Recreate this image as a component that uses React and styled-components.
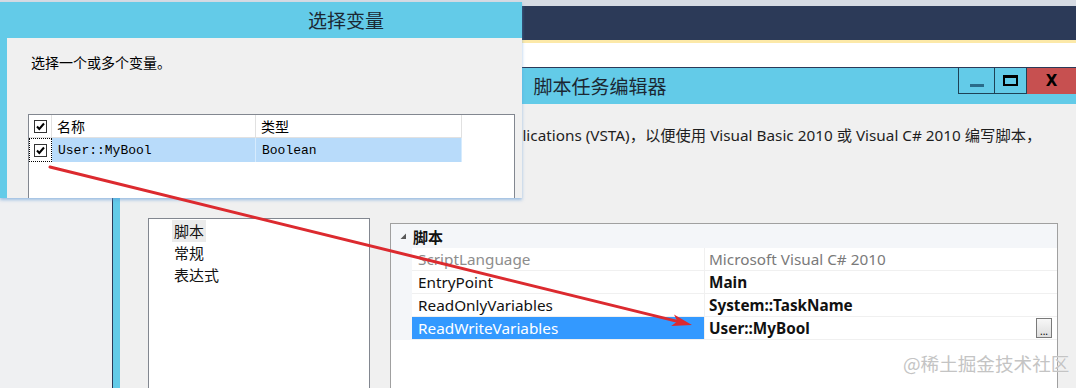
import React from 'react'
import styled, { createGlobalStyle } from 'styled-components'

const GlobalStyle = createGlobalStyle`
  *, *::before, *::after { box-sizing: border-box; }
  html, body { margin: 0; padding: 0; }
  body {
    width: 1076px;
    height: 388px;
    overflow: hidden;
    background: #eff0f2;
    font-family: "Noto Sans", "Noto Sans CJK SC", sans-serif;
    color: #1e1e1e;
  }
`

const Screen = styled.div`
  position: relative;
  width: 1076px;
  height: 388px;
  overflow: hidden;
  display: flex;
  flex-direction: column;
  background: #eff0f2;
`
const TopStrip = styled.div`
  height: 6px;
  flex-shrink: 0;
  background: #d6dbe3;
`
const NavBar = styled.div`
  height: 34px;
  flex-shrink: 0;
  background: #2c3a58;
`
const InfoLine = styled.div`
  height: 3px;
  flex-shrink: 0;
  background: #fce9a9;
`
const WhiteBar = styled.div`
  height: 24px;
  flex-shrink: 0;
  background: #ffffff;
`
const Desk = styled.div`
  display: flex;
  flex: 1;
  min-height: 0;
`
const Gutter = styled.div`
  width: 112px;
  flex-shrink: 0;
  background: #eff0f2;
`
const Window = styled.div`
  width: 972px;
  flex-shrink: 0;
  display: flex;
  flex-direction: column;
  border-top: 1px solid #2c3a58;
  border-left: 1px solid #2c3a58;
  background: #63cbe8;
  padding: 0 8px 0 7px;
`
const TitleBar = styled.div`
  height: 36px;
  flex-shrink: 0;
  display: flex;
  align-items: flex-start;
`
const TitleText = styled.div`
  flex: 1;
  padding-left: 122px;
  text-align: center;
  font-family: "Noto Sans CJK SC", sans-serif;
  font-size: 19px;
  line-height: 36px;
  color: #1b2833;
`
const WinButtons = styled.div`
  display: flex;
  height: 26px;
`
const WinButton = styled.div`
  width: ${p => p.$w}px;
  height: 26px;
  display: flex;
  align-items: center;
  justify-content: center;
  background: ${p => (p.$close ? '#c75050' : 'transparent')};
  border: ${p => (p.$close ? 'none' : '1px solid #1e4256')};
  border-top: none;
  border-right: ${p => (p.$last ? '1px solid #1e4256' : 'none')};
`
const MinGlyph = styled.span`
  width: 14px;
  height: 3px;
  margin-top: 9px;
  background: #2a6c8a;
`
const MaxGlyph = styled.span`
  width: 15px;
  height: 11px;
  border: 2px solid #000;
  border-top-width: 3px;
`
const CloseGlyph = styled.span`
  font-family: "DejaVu Sans", sans-serif;
  font-weight: bold;
  font-size: 15px;
  line-height: 1;
  color: #000;
`
const WinBody = styled.div`
  flex: 1;
  min-height: 0;
  background: #f0f0f0;
  padding: 20px 0 0 28px;
  display: flex;
  flex-direction: column;
`
const Description = styled.div`
  font-size: 15.3px;
  line-height: 22px;
  white-space: nowrap;
  padding-left: ${p => p.$indent}px;
  color: #1e1e1e;
`
const ContentRow = styled.div`
  display: flex;
  align-items: flex-start;
  gap: 20px;
  margin-top: 72px;
`
const TreeList = styled.div`
  width: 222px;
  height: 200px;
  flex-shrink: 0;
  background: #fff;
  border: 1px solid #828790;
  padding-top: 1px;
`
const TreeItem = styled.div`
  width: fit-content;
  margin-left: 23px;
  padding: 0 2px;
  height: 22px;
  line-height: 22px;
  font-family: "Noto Sans CJK SC", sans-serif;
  font-size: 15px;
  color: #111;
  background: ${p => (p.$active ? '#ebebeb' : 'transparent')};
`
const PropGrid = styled.div`
  width: 668px;
  height: 200px;
  flex-shrink: 0;
  margin-top: 5px;
  background: #fff;
  border: 1px solid #a0a0a0;
`
const CategoryRow = styled.div`
  height: 24px;
  display: flex;
  align-items: center;
  gap: 6px;
  padding-left: 9px;
  background: #f4f6f9;
  font-family: "Noto Sans CJK SC", sans-serif;
  font-weight: bold;
  font-size: 15px;
  color: #111;
`
const PropRow = styled.div`
  display: grid;
  grid-template-columns: 21px 293px 1fr;
  height: 23px;
`
const RowGutter = styled.div`
  background: #f4f6f9;
`
const NameCell = styled.div`
  padding-left: 6px;
  font-size: 15.3px;
  line-height: 22px;
  border-bottom: 1px solid #f0f0f0;
  border-right: 1px solid #f0f0f0;
  white-space: nowrap;
  background: ${p => (p.$selected ? '#3399ff' : '#fff')};
  color: ${p => (p.$selected ? '#fff' : p.$muted ? '#8d8d8d' : '#111')};
`
const ValueCell = styled.div`
  display: flex;
  align-items: center;
  padding-left: 4px;
  font-size: 15.3px;
  line-height: 22px;
  border-bottom: 1px solid #f0f0f0;
  white-space: nowrap;
  font-weight: ${p => (p.$bold ? 'bold' : 'normal')};
  color: ${p => (p.$muted ? '#7a7a7a' : '#111')};
`
const EllipsisButton = styled.div`
  margin-left: auto;
  margin-right: 5px;
  width: 16px;
  height: 20px;
  border: 1px solid #7a7a7a;
  background: linear-gradient(#f7f7f7, #dedede);
  font-size: 10px;
  line-height: 24px;
  text-align: center;
  font-weight: normal;
  color: #000;
`

/* variable picker dialog over the editor */
const Dialog = styled.div`
  position: absolute;
  left: 0;
  top: 2px;
  width: 522px;
  height: 196px;
  overflow: hidden;
  display: flex;
  flex-direction: column;
  background: #f0f0f0;
  border-left: 7px solid #63cbe8;
  box-shadow: 0 2px 3px rgba(90, 150, 215, 0.55);
`
const DialogTitle = styled.div`
  height: 36px;
  flex-shrink: 0;
  background: #63cbe8;
  padding-left: 301px;
  font-family: "Noto Sans CJK SC", sans-serif;
  font-size: 19px;
  line-height: 36px;
  color: #1b2833;
`
const DialogBody = styled.div`
  padding: 14px 0 0 21px;
`
const Prompt = styled.div`
  padding-left: 3px;
  font-family: "Noto Sans CJK SC", sans-serif;
  font-size: 14px;
  line-height: 20px;
  color: #000;
`
const VarList = styled.div`
  margin-top: 42px;
  width: 487px;
  height: 120px;
  background: #fff;
  border: 1px solid #828790;
`
const VarRow = styled.div`
  display: flex;
  height: ${p => (p.$header ? 23 : 24)}px;
`
const VarCell = styled.div`
  width: ${p => p.$w}px;
  flex-shrink: 0;
  display: flex;
  align-items: center;
  padding-left: ${p => (p.$check ? 0 : p.$mono ? 6 : 5)}px;
  justify-content: ${p => (p.$check ? 'center' : 'flex-start')};
  border-right: 1px solid ${p => (p.$header ? '#e1e1e1' : p.$selected ? '#d6ebfd' : 'transparent')};
  border-bottom: ${p => (p.$header ? '1px solid #e1e1e1' : 'none')};
  background: ${p => (p.$selected ? '#b8dbfa' : '#fff')};
  outline: ${p => (p.$focus ? '1px dotted #000' : 'none')};
  outline-offset: -1px;
  font-family: ${p => (p.$mono ? '"Liberation Mono", monospace' : '"Noto Sans CJK SC", sans-serif')};
  font-size: ${p => (p.$mono ? 13 : 14)}px;
  color: #000;
`
const CheckBox = styled.span`
  width: 13px;
  height: 13px;
  display: flex;
  align-items: center;
  justify-content: center;
  border: 1px solid #333;
  background: #fff;
`

const Overlay = styled.svg`
  position: absolute;
  left: 0;
  top: 0;
  pointer-events: none;
`
const Watermark = styled.div`
  position: absolute;
  left: 903px;
  top: 350px;
  font-family: "Noto Sans CJK SC", sans-serif;
  font-size: 18.6px;
  line-height: 26px;
  color: #c4c4c4;
  text-shadow: 0 0 1px #fff;
  white-space: nowrap;
  pointer-events: none;
`

const Check = () => (
  <CheckBox>
    <svg width="11" height="11" viewBox="0 0 11 11">
      <path d="M2 5.5 L4.3 8 L9 2.5" fill="none" stroke="#000" strokeWidth="2" />
    </svg>
  </CheckBox>
)

const Triangle = () => (
  <svg width="7" height="7" viewBox="0 0 7 7">
    <polygon points="6,0.5 6,6 0.5,6" fill="#595959" />
  </svg>
)

const props = [
  { name: 'ScriptLanguage', value: 'Microsoft Visual C# 2010', muted: true },
  { name: 'EntryPoint', value: 'Main' },
  { name: 'ReadOnlyVariables', value: 'System::TaskName' },
  { name: 'ReadWriteVariables', value: 'User::MyBool', selected: true },
]

const Arrow = () => {
  const x1 = 50, y1 = 167, x2 = 692, y2 = 325
  const dx = x2 - x1, dy = y2 - y1
  const len = Math.hypot(dx, dy)
  const ux = dx / len, uy = dy / len
  const px = -uy, py = ux
  const bx = x2 - ux * 20, by = y2 - uy * 20
  const nx = x2 - ux * 15, ny = y2 - uy * 15
  const head = [
    [x2, y2],
    [bx + px * 6, by + py * 6],
    [nx, ny],
    [bx - px * 6, by - py * 6],
  ].map(p => p.join(',')).join(' ')
  return (
    <Overlay width="1076" height="388">
      <line x1={x1} y1={y1} x2={nx} y2={ny} stroke="#dc2a2f" strokeWidth="3" strokeLinecap="round" />
      <polygon points={head} fill="#dc2a2f" />
    </Overlay>
  )
}

const App = () => {
  return (
    <Screen>
      <GlobalStyle />
      <TopStrip />
      <NavBar />
      <InfoLine />
      <WhiteBar />
      <Desk>
        <Gutter />
        <Window>
          <TitleBar>
            <TitleText>脚本任务编辑器</TitleText>
            <WinButtons>
              <WinButton $w={36}><MinGlyph /></WinButton>
              <WinButton $w={33} $last><MaxGlyph /></WinButton>
              <WinButton $w={49} $close><CloseGlyph>X</CloseGlyph></WinButton>
            </WinButtons>
          </TitleBar>
          <WinBody>
            {/* the start of the sentence sits under the dialog */}
            <Description $indent={365}>
              plications (VSTA)，以便使用 Visual Basic 2010 或 Visual C# 2010 编写脚本，
            </Description>
            <ContentRow>
              <TreeList>
                <TreeItem $active>脚本</TreeItem>
                <TreeItem>常规</TreeItem>
                <TreeItem>表达式</TreeItem>
              </TreeList>
              <PropGrid>
                <CategoryRow>
                  <Triangle />
                  脚本
                </CategoryRow>
                {props.map(p => (
                  <PropRow key={p.name}>
                    <RowGutter />
                    <NameCell $selected={p.selected} $muted={p.muted}>{p.name}</NameCell>
                    <ValueCell $bold={!p.muted} $muted={p.muted}>
                      {p.value}
                      {p.selected && <EllipsisButton>...</EllipsisButton>}
                    </ValueCell>
                  </PropRow>
                ))}
              </PropGrid>
            </ContentRow>
          </WinBody>
        </Window>
      </Desk>

      <Dialog>
        <DialogTitle>选择变量</DialogTitle>
        <DialogBody>
          <Prompt>选择一个或多个变量。</Prompt>
          <VarList>
            <VarRow $header>
              <VarCell $w={23} $check $header><Check /></VarCell>
              <VarCell $w={204} $header>名称</VarCell>
              <VarCell $w={206} $header>类型</VarCell>
            </VarRow>
            <VarRow>
              <VarCell $w={23} $check $focus><Check /></VarCell>
              <VarCell $w={204} $selected $mono>User::MyBool</VarCell>
              <VarCell $w={206} $selected $mono>Boolean</VarCell>
            </VarRow>
          </VarList>
        </DialogBody>
      </Dialog>

      <Arrow />
      <Watermark>@稀土掘金技术社区</Watermark>
    </Screen>
  )
}

export default App
